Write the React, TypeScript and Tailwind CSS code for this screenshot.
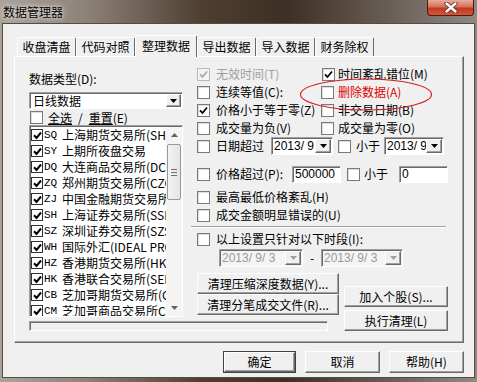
import React from "react";

const raised =
  "bg-[#f0f0f0] border border-t-white border-l-white border-r-[#696969] border-b-[#696969] shadow-[inset_-1px_-1px_0_#a0a0a0]";
const sunken =
  "border border-t-[#a0a0a0] border-l-[#a0a0a0] border-r-white border-b-white shadow-[inset_1px_1px_0_#696969]";

function Box({ checked = false, disabled = false }: { checked?: boolean; disabled?: boolean }) {
  return (
    <span
      className={
        disabled
          ? "w-[13px] h-[13px] shrink-0 flex items-center justify-center border border-[#b8b8b8] bg-[#f4f4f4]"
          : "w-[13px] h-[13px] shrink-0 flex items-center justify-center border border-[#7a7a7a] bg-white shadow-[inset_1px_1px_0_#dcdcdc]"
      }
    >
      {checked && (
        <svg width="9" height="9" viewBox="0 0 9 9">
          <path d="M1 4.3 L3.5 7 L8 1.5" fill="none" stroke={disabled ? "#a8a8a8" : "#000"} strokeWidth="1.8" />
        </svg>
      )}
    </span>
  );
}

function ListBox() {
  return (
    <span className="w-[12px] h-[12px] shrink-0 flex items-center justify-center border border-[#333] bg-white">
      <svg width="9" height="9" viewBox="0 0 9 9">
        <path d="M1 4.3 L3.5 7 L8 1.5" fill="none" stroke="#000" strokeWidth="2" />
      </svg>
    </span>
  );
}

function Arrow({ color = "#000" }: { color?: string }) {
  return (
    <svg width="7" height="4" viewBox="0 0 7 4">
      <polygon points="0,0 7,0 3.5,4" fill={color} />
    </svg>
  );
}

function DatePicker({ text, w, disabled = false }: { text: string; w: string; disabled?: boolean }) {
  return (
    <div className={`${w} h-[18px] shrink-0 flex ${sunken} ${disabled ? "bg-[#f4f4f4]" : "bg-white"}`}>
      <span
        className={
          disabled
            ? "flex-1 pl-[2px] font-['Liberation_Sans',sans-serif] text-[12px] leading-[16px] text-[#9a9a9a] whitespace-nowrap overflow-hidden"
            : "flex-1 pl-[2px] font-['Liberation_Sans',sans-serif] text-[12px] leading-[16px] text-black whitespace-nowrap overflow-hidden"
        }
      >
        {text}
      </span>
      <span className={`w-[16px] h-[14px] mt-[1px] mr-[1px] flex items-center justify-center ${raised}`}>
        <Arrow color={disabled ? "#a0a0a0" : "#000"} />
      </span>
    </div>
  );
}

function Btn({ children, className }: { children: React.ReactNode; className: string }) {
  return (
    <div className={`${className} ${raised} flex items-center justify-center whitespace-nowrap`}>{children}</div>
  );
}

const items = [
  ["SQ", "上海期货交易所(SHFE)"],
  ["SY", "上期所夜盘交易"],
  ["DQ", "大连商品交易所(DCE)"],
  ["ZQ", "郑州期货交易所(CZCE)"],
  ["ZJ", "中国金融期货交易所"],
  ["SH", "上海证券交易所(SSE)"],
  ["SZ", "深圳证券交易所(SZSE)"],
  ["WH", "国际外汇(IDEAL PRO)"],
  ["HZ", "香港期货交易所(HKFE)"],
  ["HK", "香港联合交易所(SEHK)"],
  ["CB", "芝加哥期货交易所(CBOT)"],
  ["CM", "芝加哥商品交易所CME"],
];

const tabs = ["收盘清盘", "代码对照", "整理数据", "导出数据", "导入数据", "财务除权"];

export default function App() {
  return (
    <div className="w-[477px] h-[382px] overflow-hidden flex flex-col font-['Noto_Sans_CJK_SC',sans-serif] text-[12px] leading-[14px] text-black bg-[linear-gradient(to_right,#aaa39c_0%,#8d8278_18%,#4e3f31_42%,#3d2f23_60%,#6a5f57_82%,#8f8883_100%)]">
      {/* title bar */}
      <div className="h-[23px] shrink-0 flex items-start justify-between">
        <span className="pl-[3px] pt-[5px] text-[12px] leading-[14px] text-black [text-shadow:0_0_6px_#e8e2dc,0_0_3px_#e8e2dc]">
          数据管理器
        </span>
        <div className="mr-[3px] w-[47px] h-[16px] rounded-b-[4px] border border-t-0 border-[#4a1d14] bg-[linear-gradient(to_bottom,#e9ad9e_0%,#d77058_45%,#c13a20_55%,#d6563a_100%)] flex items-center justify-center">
          <svg width="14" height="11" viewBox="0 0 14 11">
            <path d="M2.5 1.5 L11.5 9.5 M11.5 1.5 L2.5 9.5" stroke="#5a2418" strokeWidth="4" strokeLinecap="round" />
            <path d="M2.5 1.5 L11.5 9.5 M11.5 1.5 L2.5 9.5" stroke="white" strokeWidth="2.4" strokeLinecap="round" />
          </svg>
        </div>
      </div>

      {/* client */}
      <div className="flex-1 ml-[2px] mr-[2px] mb-[4px] bg-[#f0f0f0] border border-[#5a4a3e] flex flex-col pt-[11px] pl-[11px] pr-[10px]">
        {/* tabs */}
        <div className="h-[21px] flex items-end pl-[3px]">
          {tabs.map((t, i) =>
            i === 2 ? (
              <div
                key={t}
                className="relative z-10 w-[62px] h-[22px] -mb-[1px] bg-[#f0f0f0] border-t border-l border-r border-t-white border-l-white border-r-[#696969] rounded-t-[2px] flex items-center justify-center pb-[2px]"
              >
                {t}
              </div>
            ) : (
              <div
                key={t}
                className="w-[59px] h-[19px] border-t border-l border-r border-t-white border-l-white border-r-[#696969] rounded-t-[2px] flex items-center justify-center"
              >
                {t}
              </div>
            )
          )}
        </div>

        {/* panel */}
        <div className="relative h-[287px] border border-t-white border-l-white border-r-[#696969] border-b-[#696969] shadow-[inset_-1px_-1px_0_#a0a0a0] flex pl-[14px] gap-[14px]">
          {/* left column */}
          <div className="w-[154px] shrink-0 flex flex-col pt-[15px]">
            <div className="h-[14px]">数据类型(D):</div>
            <div className={`mt-[6px] h-[17px] flex bg-white ${sunken}`}>
              <span className="flex-1 pl-[3px] leading-[15px]">日线数据</span>
              <span className={`w-[15px] h-[13px] mt-[1px] mr-[1px] flex items-center justify-center ${raised}`}>
                <Arrow />
              </span>
            </div>
            <div className="mt-[1px] h-[15px] flex items-center pl-[1px]">
              <Box />
              <span className="ml-[5px] underline">全选</span>
              <span className="ml-[6px]">/</span>
              <span className="ml-[6px] underline">重置</span>
              <span>(E)</span>
            </div>
            <div className={`h-[192px] bg-white flex overflow-hidden ${sunken}`}>
              <div className="flex-1 min-w-0 pt-[1px] pl-[1px]">
                {items.map(([c, n]) => (
                  <div key={c} className="h-[16px] flex items-center whitespace-nowrap overflow-hidden">
                    <ListBox />
                    <span className="ml-[1px] w-[18px] shrink-0 font-['Liberation_Mono',monospace] text-[11px]">{c}</span>
                    <span className="whitespace-nowrap">{n}</span>
                  </div>
                ))}
              </div>
              <div className="w-[16px] shrink-0 bg-[#f4f4f4] flex flex-col mt-[1px]">
                <div className="h-[16px] flex items-center justify-center">
                  <svg width="7" height="4" viewBox="0 0 7 4">
                    <polygon points="0,4 7,4 3.5,0" fill="#606060" />
                  </svg>
                </div>
                <div className="mt-[1px] mx-[1px] h-[56px] rounded-[2px] border border-[#9a9a9a] bg-[linear-gradient(to_right,#f4f4f4,#e4e4e4)] flex flex-col items-center justify-center gap-[2px]">
                  <span className="w-[6px] h-[1px] bg-[#707070]" />
                  <span className="w-[6px] h-[1px] bg-[#707070]" />
                  <span className="w-[6px] h-[1px] bg-[#707070]" />
                </div>
                <div className="flex-1" />
                <div className="h-[16px] flex items-center justify-center">
                  <Arrow color="#606060" />
                </div>
              </div>
            </div>
            <div className={`mt-[4px] w-[299px] h-[10px] shrink-0 ${sunken}`} />
          </div>

          {/* right column */}
          <div className="w-[251px] shrink-0 flex flex-col pt-[8px]">
            <div className="h-[18px] flex items-center">
              <div className="w-[125px] flex items-center">
                <Box checked disabled />
                <span className="ml-[6px] text-[#a0a0a0]">无效时间(T)</span>
              </div>
              <Box checked />
              <span className="ml-[3px]">时间紊乱错位(M)</span>
            </div>
            <div className="h-[18px] flex items-center">
              <div className="w-[124px] flex items-center">
                <Box />
                <span className="ml-[6px]">连续等值(C):</span>
              </div>
              <Box />
              <span className="ml-[4px] text-[#e00000]">删除数据(A)</span>
            </div>
            <div className="h-[18px] flex items-center">
              <div className="w-[124px] flex items-center">
                <Box checked />
                <span className="ml-[6px]">价格小于等于零(Z)</span>
              </div>
              <Box />
              <span className="ml-[4px]">非交易日期(B)</span>
            </div>
            <div className="h-[18px] flex items-center">
              <div className="w-[124px] flex items-center">
                <Box />
                <span className="ml-[6px]">成交量为负(V)</span>
              </div>
              <Box />
              <span className="ml-[4px]">成交量为零(O)</span>
            </div>
            <div className="h-[18px] flex items-center">
              <Box />
              <span className="ml-[6px] w-[55px] shrink-0">日期超过</span>
              <DatePicker text="2013/ 9" w="w-[62px]" />
              <span className="ml-[5px]" />
              <Box />
              <span className="ml-[5px] w-[28px] shrink-0">小于</span>
              <DatePicker text="2013/ 9" w="w-[60px]" />
            </div>
            <div className="mt-[10px] h-[18px] flex items-center">
              <Box />
              <span className="ml-[6px] w-[76px] shrink-0 whitespace-nowrap">价格超过(P):</span>
              <div className={`w-[49px] h-[17px] bg-white ${sunken} pl-[2px] font-['Liberation_Sans',sans-serif] leading-[15px]`}>500000</div>
              <span className="ml-[6px]" />
              <Box />
              <span className="ml-[4px] w-[35px] shrink-0">小于</span>
              <div className={`w-[49px] h-[17px] bg-white ${sunken} pl-[2px] font-['Liberation_Sans',sans-serif] leading-[15px]`}>0</div>
            </div>
            <div className="mt-[5px] h-[18px] flex items-center">
              <Box />
              <span className="ml-[6px]">最高最低价格紊乱(H)</span>
            </div>
            <div className="h-[18px] flex items-center">
              <Box />
              <span className="ml-[6px]">成交金额明显错误的(U)</span>
            </div>
            <div className="mt-[2px] -ml-[6px] w-[255px] h-[2px] border-t border-t-[#a0a0a0] border-b border-b-white" />
            <div className="mt-[2px] h-[18px] flex items-center">
              <Box />
              <span className="ml-[6px]">以上设置只针对以下时段(I):</span>
            </div>
            <div className="mt-[1px] h-[18px] flex items-center pl-[22px]">
              <DatePicker text="2013/ 9/ 3" w="w-[84px]" disabled />
              <span className="w-[18px] text-center">-</span>
              <DatePicker text="2013/ 9/ 3" w="w-[82px]" disabled />
            </div>
            <div className="mt-[6px] flex">
              <div className="flex flex-col">
                <Btn className="w-[142px] h-[21px]">清理压缩深度数据(Y)...</Btn>
                <Btn className="w-[142px] h-[21px]">清理分笔成交文件(R)...</Btn>
              </div>
              <div className="ml-[5px] pt-[13px] flex flex-col gap-[3px]">
                <Btn className="w-[104px] h-[21px]">加入个股(S)...</Btn>
                <Btn className="w-[104px] h-[21px]">执行清理(L)</Btn>
              </div>
            </div>
          </div>

          {/* red annotation ellipse */}
          <svg className="absolute left-[284px] top-[21px] pointer-events-none" width="134" height="33" viewBox="0 0 134 33">
            <ellipse cx="67" cy="16.5" rx="65.5" ry="15.5" fill="none" stroke="#d42020" strokeWidth="1.2" />
          </svg>
        </div>

        {/* bottom buttons */}
        <div className="mt-[8px] flex justify-end gap-[9px]">
          <div className="w-[73px] h-[22px] border border-[#404040] flex">
            <div className={`flex-1 ${raised} flex items-center justify-center`}>确定</div>
          </div>
          <Btn className="w-[75px] h-[22px]">取消</Btn>
          <Btn className="w-[75px] h-[22px]">帮助(H)</Btn>
        </div>
      </div>
    </div>
  );
}
